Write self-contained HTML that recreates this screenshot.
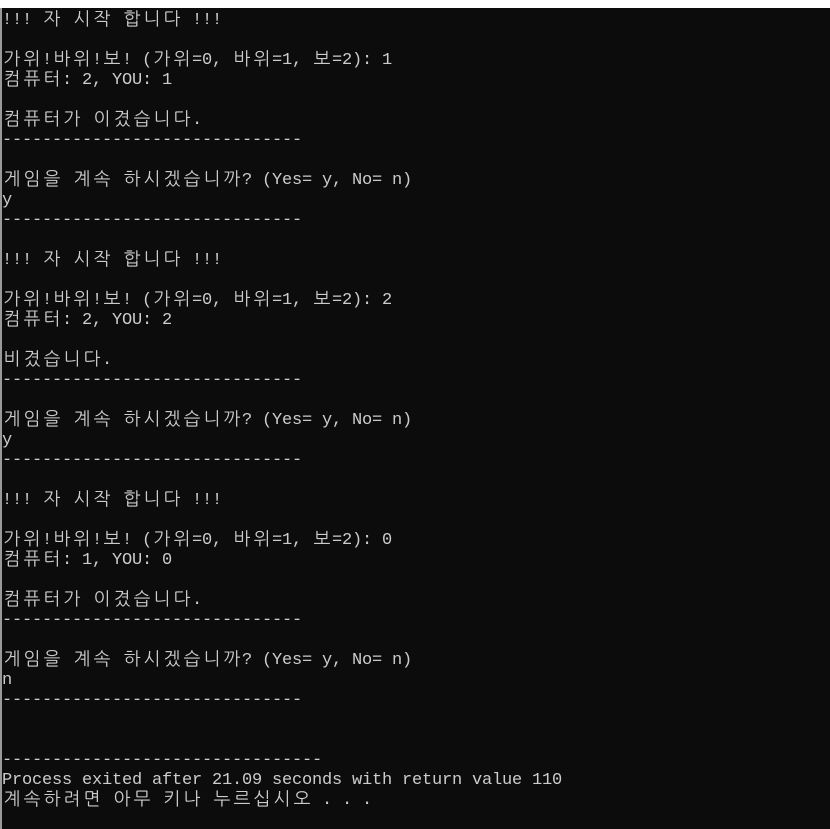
<!DOCTYPE html>
<html><head><meta charset="utf-8">
<style>
html,body{margin:0;padding:0;width:830px;height:829px;overflow:hidden;background:#fff;}
#c{position:absolute;left:0;top:8px;width:830px;height:821px;background:#0c0c0c;border-left:2px solid #9a9a9a;box-sizing:border-box;}
pre{margin:0;position:absolute;left:0;top:3px;font-family:"Liberation Mono","NanumGothic","Noto Sans CJK KR",monospace;font-size:17px;line-height:20px;color:#cccccc;white-space:pre;}
pre span{display:inline-block;width:10px;height:20px;line-height:20px;vertical-align:top;text-align:center;overflow:visible;}
pre span.w{width:20px;font-size:18px;}
</style></head><body>
<div id="c"><pre id="t">!!! 자 시작 합니다 !!!

가위!바위!보! (가위=0, 바위=1, 보=2): 1
컴퓨터: 2, YOU: 1

컴퓨터가 이겼습니다.
------------------------------

게임을 계속 하시겠습니까? (Yes= y, No= n)
y
------------------------------

!!! 자 시작 합니다 !!!

가위!바위!보! (가위=0, 바위=1, 보=2): 2
컴퓨터: 2, YOU: 2

비겼습니다.
------------------------------

게임을 계속 하시겠습니까? (Yes= y, No= n)
y
------------------------------

!!! 자 시작 합니다 !!!

가위!바위!보! (가위=0, 바위=1, 보=2): 0
컴퓨터: 1, YOU: 0

컴퓨터가 이겼습니다.
------------------------------

게임을 계속 하시겠습니까? (Yes= y, No= n)
n
------------------------------


--------------------------------
Process exited after 21.09 seconds with return value 110
계속하려면 아무 키나 누르십시오 . . .</pre></div>
<script>
var p=document.getElementById('t');var s=p.textContent;var h='';
var lines=s.split('\n');
for(var l=0;l<lines.length;l++){var t=lines[l];var r='';
for(var i=0;i<t.length;i++){var ch=t[i];
var e=ch=='&'?'&amp;':ch=='<'?'&lt;':ch;
r+=(ch.charCodeAt(0)>0x1100?'<span class="w">':'<span>')+(ch==' '?'&nbsp;':e)+'</span>';}
h+='<div style="height:20px;white-space:nowrap">'+r+'</div>';}
p.innerHTML=h;
</script>
</body></html>
